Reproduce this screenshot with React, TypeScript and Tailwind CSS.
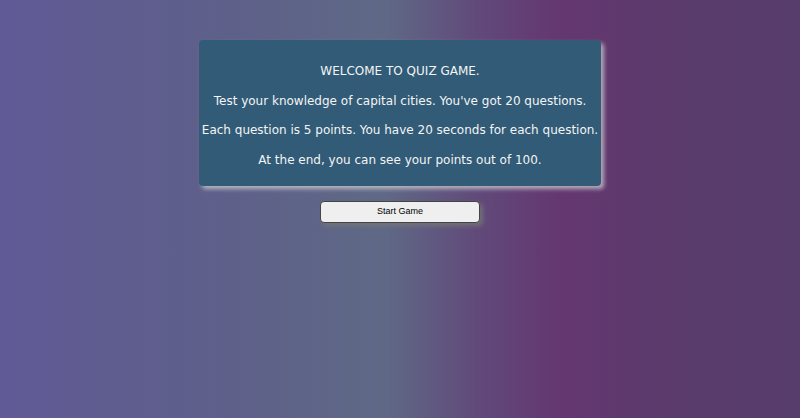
export default function App() {
  return (
    <main className="min-h-[418px] w-full bg-[linear-gradient(90deg,#605a96_0%,#5e6089_30%,#5f6986_48%,#61497a_60%,#643770_70%,#5a3b6c_85%,#573d6c_100%)] pt-[40px] font-['DejaVu_Sans',Tahoma,sans-serif]">
      <div className="mx-auto w-[402px] whitespace-nowrap rounded-[4px] bg-[#315b77] pt-[22px] pb-[17px] text-center text-[12px] leading-[18px] text-[#f4f4f4] shadow-[3px_3px_4px_rgba(210,210,210,0.75)]">
        <p>WELCOME TO QUIZ GAME.</p>
        <p className="mt-[11.5px]">
          Test your knowledge of capital cities. You've got 20 questions.
        </p>
        <p className="mt-[11.5px]">
          Each question is 5 points. You have 20 seconds for each question.
        </p>
        <p className="mt-[11.5px]">
          At the end, you can see your points out of 100.
        </p>
      </div>

      <div className="mt-[15px] flex justify-center">
        <button className="h-[22px] w-[160px] rounded-[4px] border border-[#444] bg-[#efefef] font-['Liberation_Sans',Arial,sans-serif] text-[9px] text-black shadow-[3px_3px_5px_rgba(120,120,120,0.8)]">
          Start Game
        </button>
      </div>
    </main>
  );
}
